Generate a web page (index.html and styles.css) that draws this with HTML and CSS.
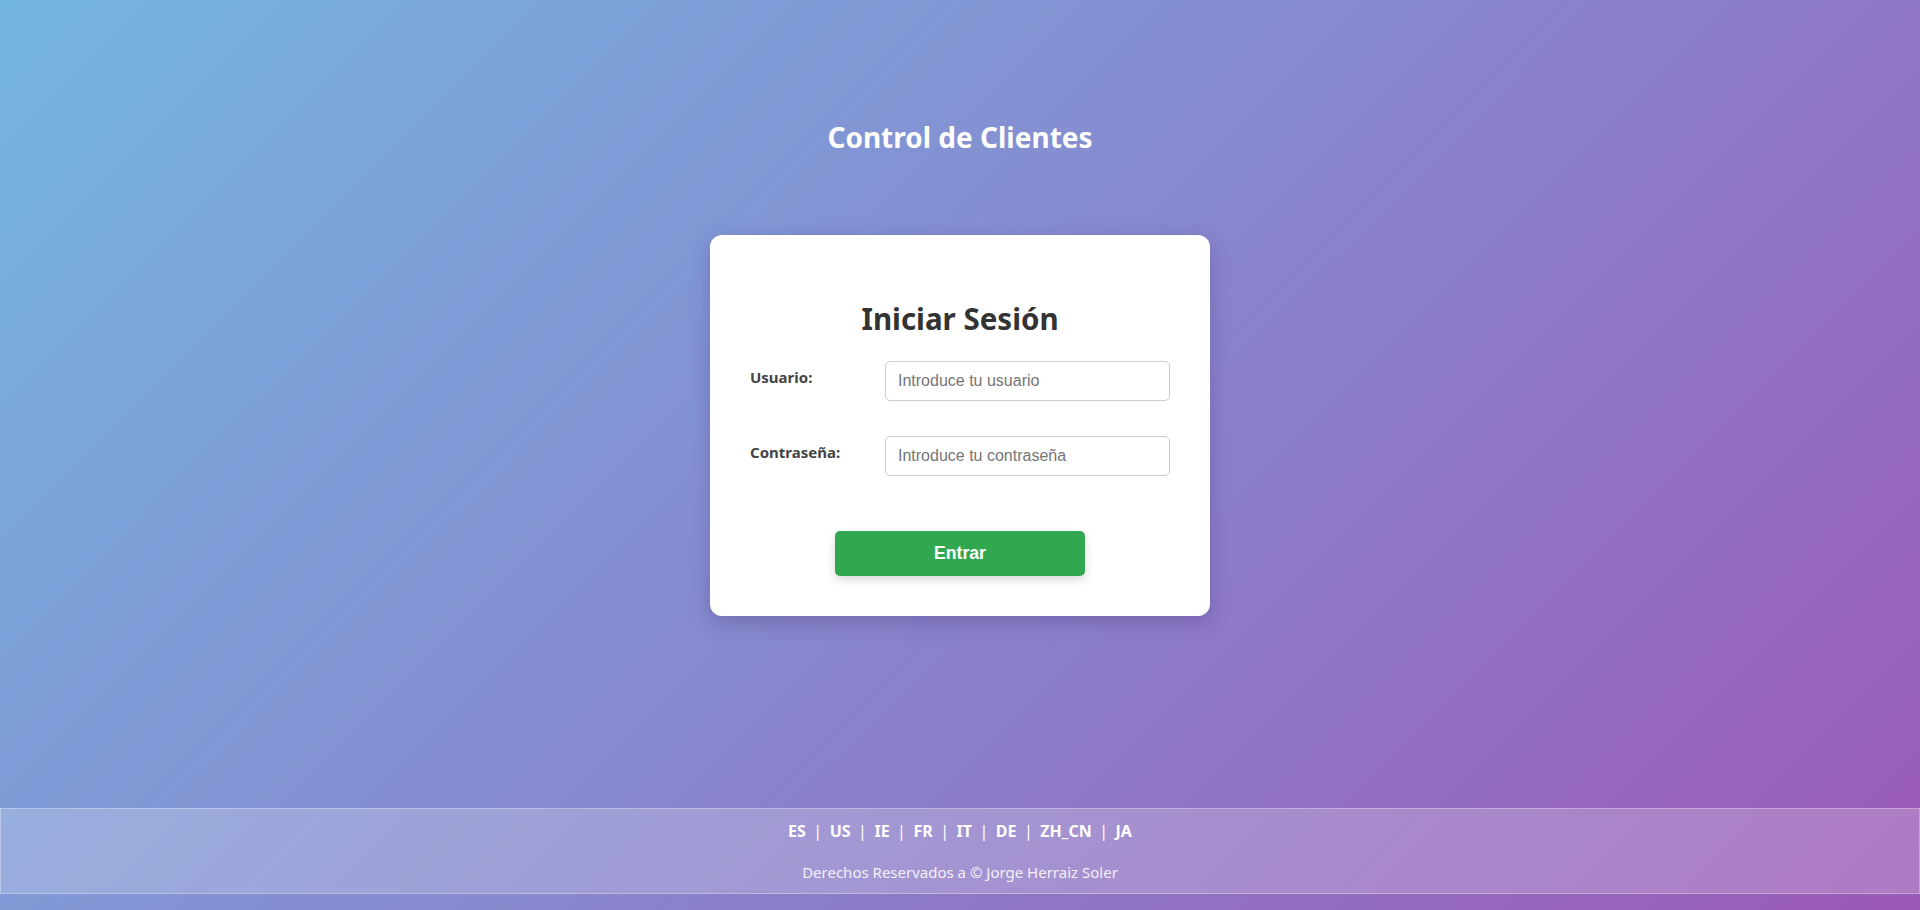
FILE: index.html
```html
<!DOCTYPE html>
<html lang="es">
<head>
<meta charset="utf-8">
<title>Control de Clientes</title>
<link rel="stylesheet" href="styles.css">
</head>
<body>
<header class="site-header">
  <h1 class="site-title">Control de Clientes</h1>
</header>
<main class="main">
  <div class="login-card">
    <h2 class="login-title">Iniciar Sesión</h2>
    <form class="login-form">
      <div class="form-row">
        <label class="form-label" for="usuario">Usuario:</label>
        <input class="form-input" id="usuario" type="text" placeholder="Introduce tu usuario">
      </div>
      <div class="form-row">
        <label class="form-label" for="pass">Contraseña:</label>
        <input class="form-input" id="pass" type="password" placeholder="Introduce tu contraseña">
      </div>
      <div class="form-actions">
        <button class="btn-submit" type="button">Entrar</button>
      </div>
    </form>
  </div>
</main>
<footer class="site-footer">
  <div class="langs">
    <a href="#">ES</a><span class="sep">|</span><a href="#">US</a><span class="sep">|</span><a href="#">IE</a><span class="sep">|</span><a href="#">FR</a><span class="sep">|</span><a href="#">IT</a><span class="sep">|</span><a href="#">DE</a><span class="sep">|</span><a href="#">ZH_CN</a><span class="sep">|</span><a href="#">JA</a>
  </div>
  <p class="copy">Derechos Reservados a © Jorge Herraiz Soler</p>
</footer>
</body>
</html>
```

FILE: styles.css
```css
* { box-sizing: border-box; }

html, body { margin: 0; padding: 0; }

body {
  min-height: 100vh;
  display: flex;
  flex-direction: column;
  font-family: "Noto Sans", "Open Sans", sans-serif;
  background: linear-gradient(135deg, #74b6e4 0%, #9b59b6 100%);
  color: #333;
}

.site-header {
  padding-top: 117px;
  text-align: center;
}

.site-title {
  margin: 0;
  font-size: 28px;
  line-height: 40px;
  font-weight: 700;
  color: #fff;
}

.main {
  flex: 1;
  display: flex;
  justify-content: center;
  align-items: flex-start;
  padding-top: 78px;
}

.login-card {
  width: 500px;
  background: #fff;
  border-radius: 12px;
  padding: 40px;
  box-shadow: 0 6px 20px rgba(60, 40, 110, 0.28);
}

.login-title {
  margin: 20px 0 18px;
  text-align: center;
  font-size: 29.5px;
  line-height: 48px;
  font-weight: 700;
  color: #333;
}

.login-form {
  display: flex;
  flex-direction: column;
  gap: 35px;
}

.form-row {
  display: grid;
  grid-template-columns: 135px 1fr;
  align-items: start;
}

.form-label {
  padding-top: 6px;
  font-size: 15px;
  line-height: 20px;
  font-weight: 700;
  color: #444;
}

.form-input {
  height: 40px;
  width: 100%;
  padding: 0 12px;
  border: 1px solid #ccc;
  border-radius: 5px;
  font-family: "Liberation Sans", Arial, sans-serif;
  font-size: 16px;
  color: #333;
  background: #fff;
}

.form-input::placeholder { color: #757575; }

.form-actions {
  display: flex;
  justify-content: center;
  padding-top: 20px;
}

.btn-submit {
  width: 250px;
  height: 45px;
  border: none;
  border-radius: 5px;
  background: #31a84f;
  color: #fff;
  font-family: "Liberation Sans", Arial, sans-serif;
  font-size: 17.6px;
  font-weight: 700;
  box-shadow: 0 4px 10px rgba(0, 0, 0, 0.15);
  cursor: pointer;
}

.site-footer {
  margin-bottom: 16px;
  height: 86px;
  border: 1px solid rgba(255, 255, 255, 0.3);
  background: rgba(255, 255, 255, 0.2);
  text-align: center;
  color: #fff;
  padding-top: 11px;
}

.langs {
  font-size: 16px;
  line-height: 22px;
  font-weight: 700;
}

.langs a {
  color: #fff;
  text-decoration: none;
}

.sep {
  font-weight: 400;
  margin: 0 7.5px;
}

.copy {
  margin: 20px 0 0;
  font-size: 15px;
  line-height: 20px;
  color: #f4f0fa;
}
```
